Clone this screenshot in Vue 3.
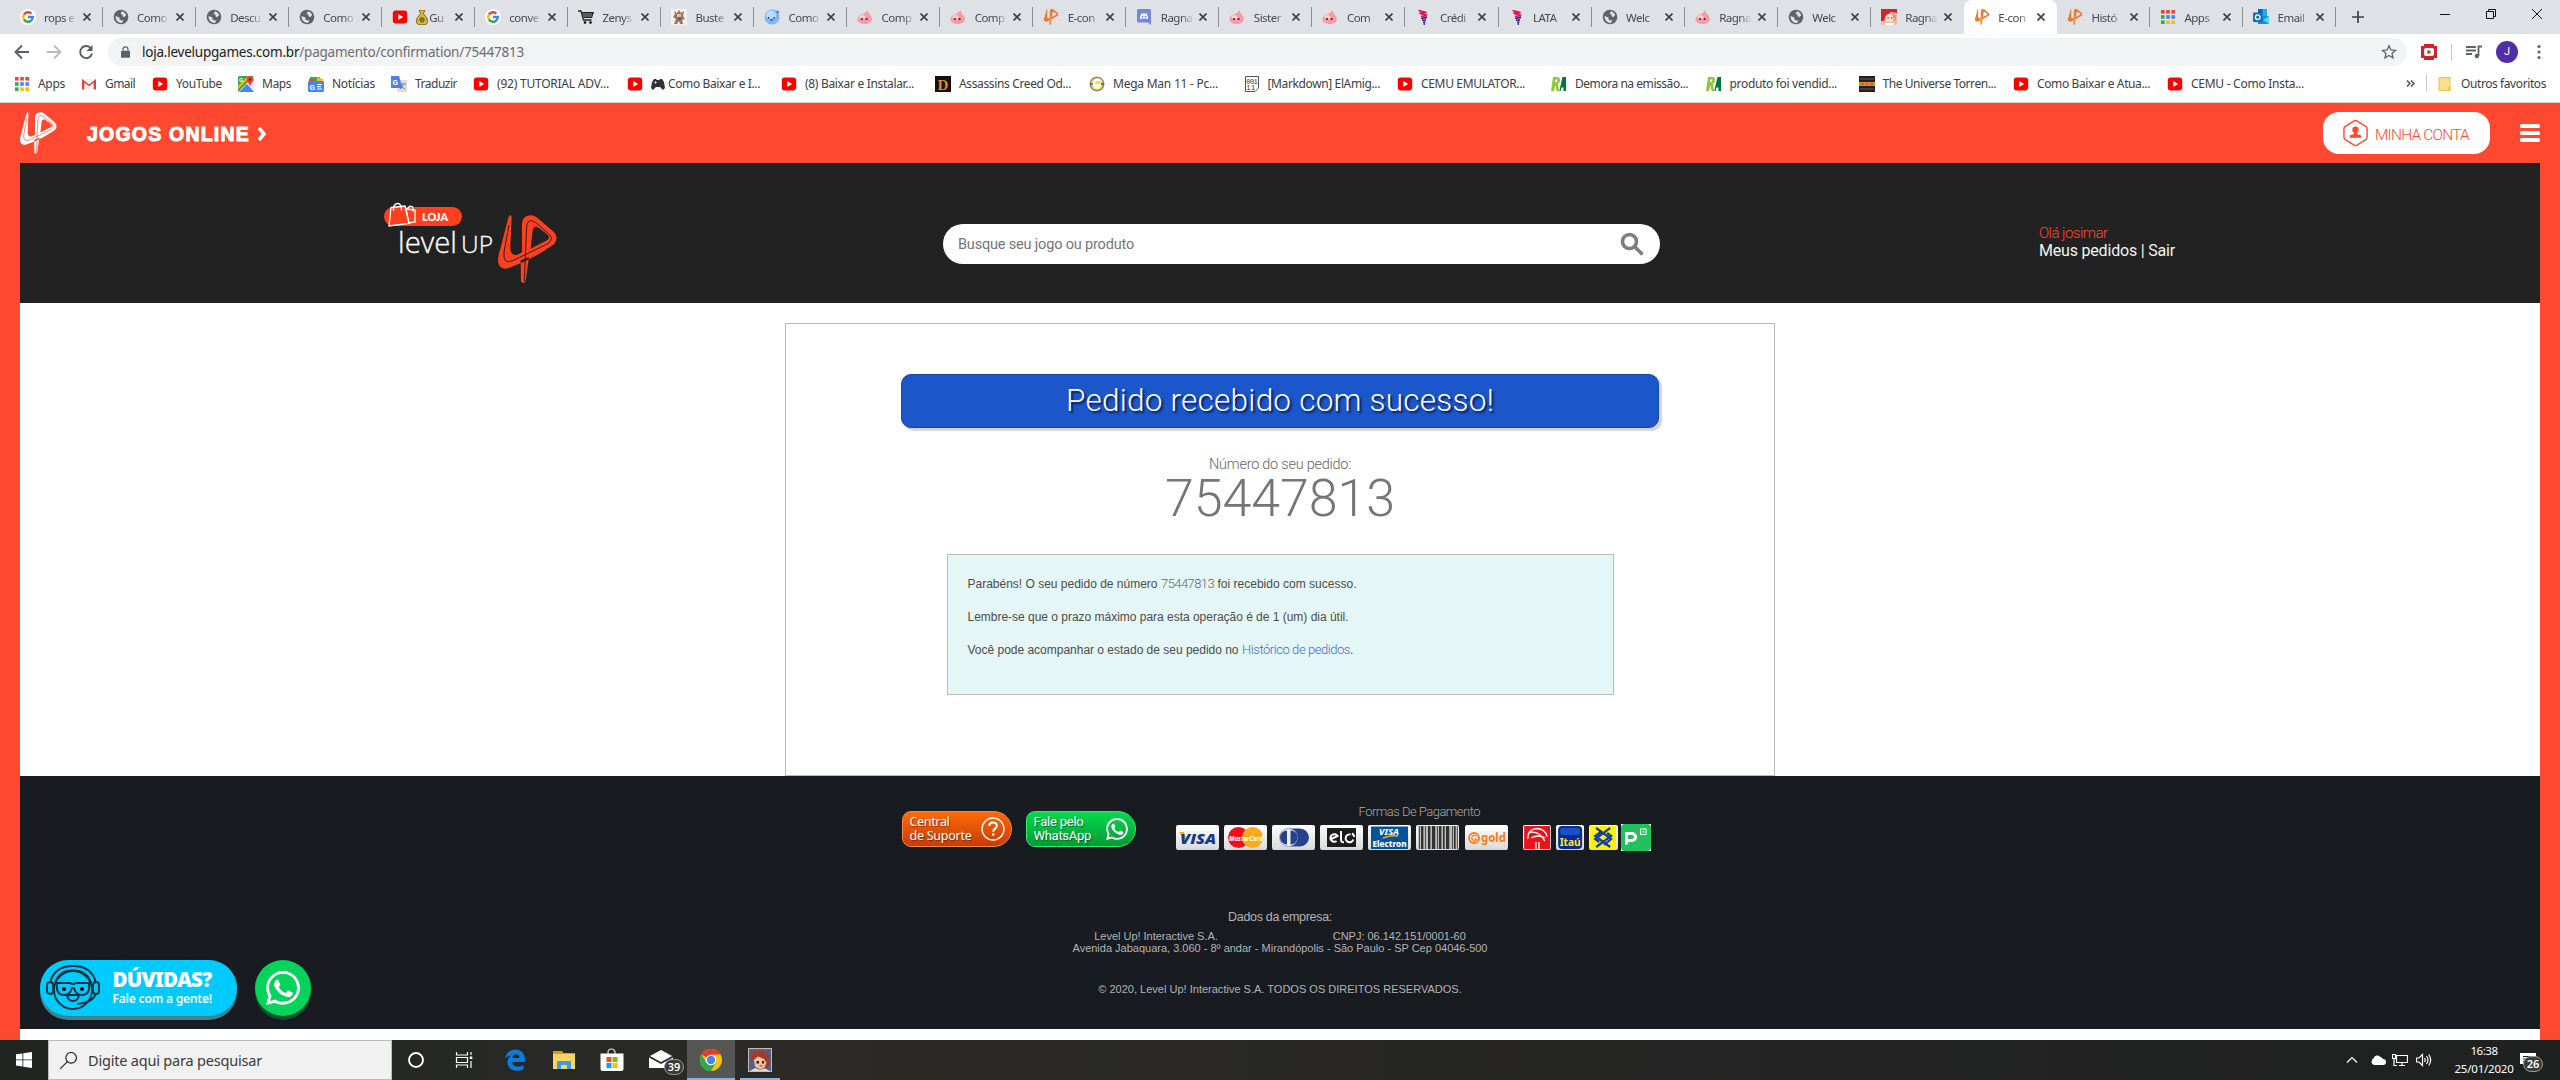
<script setup>
// Tunes letter spacing so a run of text fills the given width in pixels.
const vFit = {
  mounted(el, { value }) {
    const range = document.createRange()
    range.selectNodeContents(el)
    const width = range.getBoundingClientRect().width
    el.style.letterSpacing = `${(value - width) / el.textContent.trim().length}px`
  }
}

const lpShape =
  'M32 5Q38-3 41 5L37 98Q37 124 58 119L72 112V28Q72 2 98 1Q108 1 118 8L168 51Q184 70 168 88Q104 134 30 160Q8 166 1 145Q-2 130 6 105ZM98 101L150 74Q156 67 150 60L122 38Q108 30 104 48Z'
const lpStem = 'M68 136L93 126L83 198Q77 209 69 200Z'
const lpLine = 'M33 30L18 112Q14 150 45 137L150 86Q167 74 156 60L115 24Q90 6 86 34L79 200'
const lp = (fill, line) =>
  `<path d="${lpShape}${lpStem}" fill="${fill}" fill-rule="evenodd"/><path d="${lpLine}" fill="none" stroke="${line}" stroke-width="3"/>`

const apps = [0, 1, 2]
  .flatMap((r) =>
    [0, 1, 2].map((c) => {
      const color = [['#ea4335', '#ea4335', '#ea4335'], ['#34a853', '#4285f4', '#4285f4'], ['#34a853', '#fbbc05', '#fbbc05']][r][c]
      return `<rect x="${1 + c * 5.2}" y="${1 + r * 5.2}" width="3.6" height="3.6" fill="${color}"/>`
    })
  )
  .join('')

const icons = {
  google:
    '<circle cx="8" cy="8" r="8" fill="#fff"/><g fill="none" stroke-width="2.4"><path d="M3.9 5.6A4.8 4.8 0 0 1 11.4 4.6" stroke="#ea4335"/><path d="M3.9 5.6a4.8 4.8 0 0 0 0 4.8" stroke="#fbbc05"/><path d="M3.9 10.4a4.8 4.8 0 0 0 7.4 1.1" stroke="#34a853"/><path d="M8 8h4.8a4.8 4.8 0 0 1-1.5 3.6" stroke="#4285f4"/></g>',
  globe:
    '<circle cx="8" cy="8" r="7.3" fill="#5f6368"/><path d="M9 2.200c2 .5 3.500 2 4.200 4L11 8.300 9.500 7V5.500L7.500 5zM2.500 7l4 1.500v2l2 1 2-.3-1.500 2.800C5 14 2.500 11 2.500 7z" fill="#dee1e6"/>',
  yt: '<rect x=".8" y="1.500" width="14.400" height="13" rx="3" fill="#f00"/><path d="M6.300 5l4.800 3-4.800 3z" fill="#fff"/>',
  cart: '<path d="M0 2h3l2.500 9h8" fill="none" stroke="#222" stroke-width="1.300"/><path d="M4 3h12l-2 6H5.500z" fill="#222"/><circle cx="7" cy="13.500" r="1.300"/><circle cx="12.500" cy="13.500" r="1.300"/><path d="M5 5h9M5 7h9" stroke="#dee1e6" stroke-width=".6"/>',
  fig: '<rect width="16" height="16" fill="#f4f1ee"/><path d="M3 2l3 2 2-3 2 3 3-2-1 5 2 3-3 1 1 4H9l-1-3-2 3H3l2-5-3-2 2-3z" fill="#9a7560"/><path d="M6 5h4v3H6z" fill="#e0c3a0"/><path d="M7 8h3v3H7z" fill="#6c5a85"/>',
  angel: '<circle cx="8" cy="8" r="7.500" fill="#83b5ee"/><circle cx="7" cy="6.500" r="5" fill="#b9d9fa"/><path d="M4.500 8v2M10 8v2M6 10.500q1.500 1 3 0" stroke="#24489a" stroke-width="1.400" fill="none"/><circle cx="13.500" cy="3" r="1.600" fill="#4f8be0"/>',
  poring:
    '<path d="M10.500 1Q11 4 13 6C18 12 12 15 8 15S-2 13 1.500 7.500C3.500 5 8 5.500 10.500 1z" fill="#f99aa5"/><ellipse cx="5.500" cy="8" rx="3" ry="2" fill="#ffd0d4"/><circle cx="5" cy="10" r="1.100" fill="#45242c"/><circle cx="9.600" cy="10" r="1.100" fill="#45242c"/>',
  lp: `<g transform="translate(1 0) scale(.081 .078)">${lp('#ef6c1f', '#fbd3b8')}</g>`,
  discord:
    '<path d="M2.500 0h11Q15 0 15 1.500V16l-3-2.500H2.500Q1 13.500 1 12V1.500Q1 0 2.500 0z" fill="#7289da"/><path d="M4 10.500Q4 6 5.500 4.500h5Q12 6 12 10.500L10.500 9.500h-5z" fill="#fff"/><circle cx="6.500" cy="7.700" r=".9" fill="#7289da"/><circle cx="9.500" cy="7.700" r=".9" fill="#7289da"/>',
  latam: '<path d="M3.500 1.500l8 2.200-7 .5 7.500 2.300-6 .8" fill="none" stroke="#e8114b" stroke-width="1.800"/><path d="M6 9.300l6-.8M7 11.200l4-.2M8 13.200l2.500 0M8.500 15h1.500" fill="none" stroke="#1b0088" stroke-width="1.300"/>',
  ragna:
    '<rect width="16" height="16" rx="2" fill="#f2b8a0"/><path d="M0 0h16v4L10 3 5 7 3 12H0z" fill="#c92a2f"/><circle cx="8.500" cy="9" r="4" fill="#fde0cc"/><path d="M10 2l5 5-1 6-2-5z" fill="#e98a8c"/><circle cx="7" cy="9" r=".8" fill="#933"/><circle cx="10.500" cy="9" r=".8" fill="#933"/><path d="M4 14h9v2H4z" fill="#fff"/>',
  apps,
  outlook:
    '<path d="M5 0h9v7H5z" fill="#28a8ea"/><path d="M5 0h4.500v4H5z" fill="#0364b8"/><path d="M4 7h12v8H5z" fill="#1490df"/><path d="M16 7l-6 4 6 4z" fill="#50d9ff"/><rect y="3.500" width="9.500" height="9.500" rx="1" fill="#0f6cbd"/><circle cx="4.700" cy="8.200" r="2.300" fill="none" stroke="#fff" stroke-width="1.400"/>',
  gmail:
    '<path d="M1 3h14v10.500H1z" fill="#f2f2f2"/><path d="M1 13.500V3l7 5.500L15 3v10.500h-2.300V6.500L8 10.300 3.300 6.500v7z" fill="#db4437"/>',
  maps: '<rect width="16" height="16" rx="1.500" fill="#34a853"/><path d="M0 16L16 0v16z" fill="#e8eaed"/><path d="M1 16L9 8l7 8z" fill="#4285f4"/><path d="M0 10L10 0h3L0 13z" fill="#fbbc05"/><path d="M12 0a3.500 3.500 0 0 1 3.500 3.500C15.500 6 12.500 7 12 11 11.500 7 8.500 6 8.500 3.500A3.500 3.500 0 0 1 12 0z" fill="#ea4335"/><circle cx="12" cy="3.500" r="1.200" fill="#8c1a11"/><text x="1" y="6" font-size="6" font-weight="700" fill="#fff" font-family="Roboto, sans-serif">G</text>',
  news: '<path d="M2 1h10v5H2z" fill="#34a853"/><path d="M9 1l6 2-1 5H9z" fill="#fbbc05"/><path d="M1 3h5v3H1z" fill="#ea4335"/><rect y="5" width="16" height="11" rx="1.200" fill="#4285f4"/><text x="1.500" y="13.500" font-size="8" font-weight="700" fill="#fff" font-family="Roboto, sans-serif">G</text><path d="M9 8.500h5M9 10.700h4M9 13h5" stroke="#fff" stroke-width="1.200"/>',
  translate:
    '<rect x="6" y="4" width="10" height="12" rx="1" fill="#dcdcdc"/><path d="M9 8h6M12 7v1q0 4-3 5M10 9.500q1 2.500 4 3.500" stroke="#7b8fa8" stroke-width="1" fill="none"/><path d="M0 0h8l3.500 12H1q-1 0-1-1z" fill="#4a80e8"/><text x="1.500" y="9" font-size="8" font-weight="700" fill="#fff" font-family="Roboto, sans-serif">G</text>',
  creed: '<rect width="16" height="16" fill="#1a0f08"/><text x="2.500" y="14" font-size="15" font-weight="700" fill="#d98a2c" font-family="Liberation Serif, serif">D</text>',
  mega: '<circle cx="8" cy="8" r="7.500" fill="#8d8d7a"/><circle cx="8" cy="8" r="6" fill="#f4da45"/><path d="M12 5Q8 2 5 6t6 3q0 4-6 2" stroke="#fff" stroke-width="2.200" fill="none"/><path d="M1 8h3M12 8h3" stroke="#555" stroke-width="1.500"/>',
  bin: '<path d="M1.500.5h13V12L11 15.500H1.500z" fill="#fff" stroke="#555"/><text x="2.300" y="7.500" font-size="7" fill="#333" font-family="Liberation Mono, monospace" textLength="11.500">001</text><text x="2.300" y="14" font-size="7" fill="#333" font-family="Liberation Mono, monospace" textLength="9">11</text>',
  ra: '<path d="M2 1h4.500q3 .5 2.500 4-.5 2-2 2.500L8 15H5.500L4.500 9 3 15H0z" fill="#8dc63f"/><path d="M11.500 1H15v14h-2.500v-3.500h-2L9.500 15H8.300z" fill="#00793f"/><path d="M4.500 3.500h2L6 6H4z" fill="#fff"/>',
  torrent: '<rect width="16" height="16" fill="#2b1d16"/><path d="M0 6h16v4H0z" fill="#e28b2d"/><path d="M2 8h3M7 8h2M11 8h3M1 3h14M1 13h14" stroke="#57606c" stroke-width="1.200"/>',
  folder: '<path d="M2 1.500h11v13H2z" fill="#fbe08c" stroke="#e5c25a"/><path d="M11 11h3v3.500h-3z" fill="#f0cb60"/>'
}

const tabs = [
  ['google', 'rops e'], ['globe', 'Como'], ['globe', 'Descu'], ['globe', 'Como'], ['yt', 'Gu', true], ['google', 'conve'],
  ['cart', 'Zenys'], ['fig', 'Buste'], ['angel', 'Como'], ['poring', 'Comp'], ['poring', 'Comp'], ['lp', 'E-con'],
  ['discord', 'Ragna'], ['poring', 'Sister'], ['poring', 'Com'], ['latam', 'Crédi'], ['latam', 'LATA'], ['globe', 'Welc'],
  ['poring', 'Ragna'], ['globe', 'Welc'], ['ragna', 'Ragna'], ['lp', 'E-con'], ['lp', 'Histó'], ['apps', 'Apps'], ['outlook', 'Email']
].map(([icon, label, bag], i) => ({ icon, label, bag, active: i === 21, joined: i === 20 || i === 21 }))

// icon, label, left edge, label width
const marks = [
  ['apps', 'Apps', 14, 27], ['gmail', 'Gmail', 81, 30], ['yt', 'YouTube', 152, 46], ['maps', 'Maps', 238, 29],
  ['news', 'Notícias', 308, 43], ['translate', 'Traduzir', 391, 42], ['yt', '(92) TUTORIAL ADV...', 473, 112],
  ['yt', 'Como Baixar e I...', 627, 92, true], ['yt', '(8) Baixar e Instalar...', 781, 109], ['creed', 'Assassins Creed Od...', 935, 112],
  ['mega', 'Mega Man 11 - Pc...', 1089, 105], ['bin', '[Markdown] ElAmig...', 1243.5, 112.5], ['yt', 'CEMU EMULATOR...', 1397, 104],
  ['ra', 'Demora na emissão...', 1551, 113], ['ra', 'produto foi vendid...', 1705.5, 107.5], ['torrent', 'The Universe Torren...', 1858.5, 113.5],
  ['yt', 'Como Baixar e Atua...', 2013, 113], ['yt', 'CEMU - Como Insta...', 2167, 113]
].map(([icon, label, left, width, pad], i, all) => ({
  icon, label, width, pad, slot: (all[i + 1] ? all[i + 1][2] : 2400) - left
}))

const wa =
  'M12.040 2c-5.460 0-9.910 4.450-9.910 9.910 0 1.750.460 3.450 1.320 4.950L2.050 22l5.250-1.380c1.450.790 3.080 1.210 4.740 1.210 5.460 0 9.910-4.450 9.910-9.910S17.500 2 12.040 2m0 1.670c4.540 0 8.240 3.700 8.240 8.240s-3.700 8.240-8.240 8.240c-1.500 0-2.930-.4-4.190-1.150l-.3-.17-3.120.82.83-3.040-.2-.32a8.190 8.190 0 0 1-1.260-4.380c.01-4.540 3.700-8.240 8.240-8.240M8.500 7.300c-.2 0-.5.1-.7.3C7.500 7.900 6.800 8.500 6.800 9.800s.95 2.600 1.080 2.770c.13.17 1.860 2.980 4.600 4.060 2.270.9 2.740.72 3.230.67s1.600-.65 1.820-1.280c.23-.63.23-1.170.16-1.280s-.25-.18-.52-.31-1.600-.79-1.850-.88c-.25-.09-.43-.13-.61.14s-.7.88-.86 1.060-.32.2-.59.07-1.140-.42-2.170-1.340c-.8-.72-1.350-1.600-1.500-1.870s-.02-.42.12-.55l.4-.47c.14-.16.18-.27.27-.45.09-.18.05-.34-.02-.47s-.6-1.470-.83-2c-.22-.53-.44-.45-.6-.46z'

const bars = [[3, 1], [5, 3], [9, 1], [12, 3], [16, 4], [21, 1], [23, 3], [27, 2], [30, 4], [36, 1], [38, 2], [41, 1]]
</script>

<template>
  <div class="screen">
    <div class="tabstrip">
      <div v-for="(t, i) in tabs" :key="i" class="tab" :class="{ active: t.active, joined: t.joined }">
        <svg class="ico" viewBox="0 0 16 16" v-html="icons[t.icon]"></svg>
        <span class="tab-label"><svg v-if="t.bag" class="bag" viewBox="0 0 12 16"><path d="M3 0h6L7.500 4Q12 8 12 12 12 16 6 16T0 12Q0 8 4.500 4z" fill="#edb52b" stroke="#5b3b00" stroke-width=".8" /><circle cx="6" cy="10.500" r="3" fill="#538a35" /></svg>{{ t.label }}</span>
        <svg class="close" viewBox="0 0 8 8"><path d="M.5.5l7 7M7.500.5l-7 7" /></svg>
      </div>
      <svg class="plus" viewBox="0 0 12 12"><path d="M6 0v12M0 6h12" /></svg>
      <div class="win">
        <svg viewBox="0 0 10 10"><path d="M0 5.500h10" /></svg>
        <svg viewBox="0 0 10 10"><path d="M.5 2.500h7v7h-7zM2.500 2.500v-2h7v7h-2" /></svg>
        <svg viewBox="0 0 10 10"><path d="M0 0l10 10M10 0L0 10" /></svg>
      </div>
    </div>

    <div class="toolbar">
      <svg class="nav" viewBox="0 0 16 16"><path d="M15 8H2M8 1.500L1.500 8 8 14.500" /></svg>
      <svg class="nav off" viewBox="0 0 16 16"><path d="M1 8h13M8 1.500L14.500 8 8 14.500" /></svg>
      <svg class="nav" viewBox="0 0 16 16"><path d="M13 4.500A6 6 0 1 0 14 9.500" /><path class="solid" d="M14.500 1v6h-6z" /></svg>
      <div class="omnibox">
        <svg class="lock" viewBox="0 0 10 13"><rect y="5" width="10" height="8" rx="1" /><path d="M2.300 5V3.500a2.700 2.700 0 0 1 5.400 0V5" /></svg>
        <span v-fit="382" class="url">loja.levelupgames.com.br<i>/pagamento/confirmation/75447813</i></span>
        <svg class="star" viewBox="0 0 16 16"><path d="M8 1.800l1.900 4.200 4.500.4-3.400 3 1 4.500L8 11.500l-4 2.400 1-4.500-3.400-3 4.500-.4z" /></svg>
      </div>
      <svg class="ext" viewBox="0 0 16 16"><path d="M3 0h10v2h3v12h-3v2H3v-2H0V2h3z" fill="#d3222a" /><rect x="3" y="4" width="10" height="8" rx="2" fill="#fff" /><path d="M6.500 5.800l4 2.200-4 2.200z" fill="#d3222a" /></svg>
      <i class="rule"></i>
      <svg class="queue" viewBox="0 0 16 16"><path d="M0 3h10M0 6.500h10M0 10h6M12.500 12V2.500H16" /><circle cx="10.800" cy="12" r="2.200" /></svg>
      <span class="avatar">J</span>
      <svg class="dots" viewBox="0 0 4 16"><circle cx="2" cy="2.500" r="1.600" /><circle cx="2" cy="8" r="1.600" /><circle cx="2" cy="13.500" r="1.600" /></svg>
    </div>

    <div class="bookmarks">
      <div v-for="m in marks" :key="m.label" class="mark" :style="{ width: m.slot + 'px' }">
        <svg class="ico" viewBox="0 0 16 16" v-html="icons[m.icon]"></svg>
        <svg v-if="m.pad" class="pad" viewBox="0 0 14 12"><path d="M3 1h2l1 1h2l1-1h2l2 3 1 6-2 2-3-3H5l-3 3-2-2 1-6z" fill="#333" /><path d="M3 4.500h3M4.500 3v3" stroke="#ccc" stroke-width=".8" /></svg>
        <span v-fit="m.width">{{ m.label }}</span>
      </div>
      <svg class="more" viewBox="0 0 9 7"><path d="M1 .5l3 3-3 3M5 .5l3 3-3 3" /></svg>
      <i class="rule"></i>
      <svg class="ico folder" viewBox="0 0 16 16" v-html="icons.folder"></svg>
      <span v-fit="85">Outros favoritos</span>
    </div>

    <div class="page">
      <header class="topbar">
        <svg class="up" viewBox="0 0 178 206" preserveAspectRatio="none" v-html="lp('#fff', '#ff4830')"></svg>
        <strong v-fit="163">JOGOS ONLINE</strong>
        <svg class="chev" viewBox="0 0 9 14"><path d="M1.500 1L6.500 7l-5 6" /></svg>
        <div class="account">
          <svg viewBox="0 0 26 28"><path d="M11.500 1.400q1.500-.8 3 0L23.500 7q1.500 1 1.500 2.500v9q0 1.500-1.500 2.500l-9 5.600q-1.500.8-3 0L2.500 21Q1 20 1 18.500v-9Q1 8 2.500 7z" fill="none" stroke="#ff4830" stroke-width="1.500" /><circle cx="13" cy="10.500" r="3.300" /><path d="M11.500 12.500h3V15l4.500 1.500V19H7v-2.500l4.500-1.500z" /></svg>
          <span v-fit="94">MINHA CONTA</span>
        </div>
        <div class="burger"><i></i><i></i><i></i></div>
      </header>

      <div class="content">
        <div class="shopbar">
          <svg class="brand" viewBox="380 200 180 90">
            <rect x="384" y="207" width="78" height="19" rx="9.500" fill="#ff401f" />
            <g fill="#ff401f" stroke="#fff" stroke-width="1.300">
              <path d="M406 209l9 1v12l-6 1z" /><path d="M407.500 210q1-5 4.500-3.500 1.500 1 1 5" fill="none" />
              <path d="M391 207.500l14-1.500 4 17.500-20 2.500z" /><path d="M393.500 211q-.5-7 4-7.500 4-.2 4 7" fill="none" />
            </g>
            <text x="422" y="221" class="t-loja" textLength="26" lengthAdjust="spacingAndGlyphs">LOJA</text>
            <text x="398" y="253" class="t-level" textLength="59" lengthAdjust="spacingAndGlyphs">level</text>
            <text x="461" y="253" class="t-up" textLength="32" lengthAdjust="spacingAndGlyphs">UP</text>
            <g transform="translate(498 215) scale(.333)" v-html="lp('#ff401f', '#222')"></g>
          </svg>
          <div class="search">
            <span v-fit="176">Busque seu jogo ou produto</span>
            <svg viewBox="0 0 24 24"><circle cx="9.500" cy="9.500" r="7" /><path d="M14.500 14.500l8 8" /></svg>
          </div>
          <div class="user">
            <span v-fit="68.500" class="hello">Olá josimar</span>
            <span v-fit="136">Meus pedidos | Sair</span>
          </div>
        </div>

        <main>
          <section class="card">
            <h1><span v-fit="428">Pedido recebido com sucesso!</span></h1>
            <p class="cap"><span v-fit="142">Número do seu pedido:</span></p>
            <p class="num"><span v-fit="230">75447813</span></p>
            <div class="info">
              <p><span v-fit="190">Parabéns! O seu pedido de número</span><em v-fit="53">75447813</em><span v-fit="139">foi recebido com sucesso.</span></p>
              <p><span v-fit="381">Lembre-se que o prazo máximo para esta operação é de 1 (um) dia útil.</span></p>
              <p><span v-fit="271">Você pode acompanhar o estado de seu pedido no</span><a v-fit="108">Histórico de pedidos</a><span class="dot">.</span></p>
            </div>
          </section>
        </main>

        <footer>
          <div class="row">
            <div class="help orange">
              <span class="lines"><span v-fit="40">Central</span><span v-fit="62">de Suporte</span></span>
              <svg viewBox="0 0 24 24"><circle cx="12" cy="12" r="11" fill="none" stroke="#fff" stroke-width="1.300" /><path d="M8.300 9q0-3.600 3.700-3.600 3.800 0 3.800 3.300 0 1.800-2 3.100-1.600 1-1.600 3" fill="none" stroke="#fff" stroke-width="2" /><rect x="11" y="16.300" width="2.300" height="2.300" fill="#fff" /></svg>
            </div>
            <div class="help green">
              <span class="lines"><span v-fit="50">Fale pelo</span><span v-fit="57.500">WhatsApp</span></span>
              <svg viewBox="1 1 22 22"><path :d="wa" fill="#fff" /></svg>
            </div>
            <div class="pay">
              <p><span v-fit="121.500">Formas De Pagamento</span></p>
              <div class="cards">
                <svg viewBox="0 0 43 25"><path d="M3 7h5l3 10z" fill="#f7a823" /><text x="4" y="19" class="t-visa" textLength="36" lengthAdjust="spacingAndGlyphs">VISA</text></svg>
                <svg viewBox="0 0 43 25"><circle cx="14.500" cy="12.500" r="10.500" fill="#f20d18" /><circle cx="28.500" cy="12.500" r="10.500" fill="#ffa91f" /><text x="5" y="15.500" class="t-mc" textLength="34" lengthAdjust="spacingAndGlyphs">MasterCard</text></svg>
                <svg viewBox="0 0 43 25"><path d="M18 3.500h10a9 9 0 0 1 0 18H18z" fill="#26428f" /><circle cx="16.500" cy="12.500" r="9" fill="#eef1f6" stroke="#7f92bd" stroke-width=".8" /><path d="M15 5.500v14a7 7 0 0 1 0-14zM18.500 5.500v14a7 7 0 0 0 0-14z" fill="#26428f" /></svg>
                <svg viewBox="0 0 43 25"><rect x="7" y="3" width="29" height="19" fill="#1c1c1c" /><g fill="none" stroke="#fff" stroke-width="2"><path d="M10 14.500l7.500-3.500a3.800 3.800 0 1 0-1 5M21 6v8.500q0 3 3 2.700" /><path d="M30.500 9.500a3.900 3.900 0 1 0 2.800 5M32 8.500q2 1 2.300 3.500" /></g></svg>
                <svg viewBox="0 0 43 25"><rect x="3" y="1.500" width="37" height="22.500" fill="#02549a" /><text x="11" y="9.500" class="t-el" font-style="italic" textLength="20" lengthAdjust="spacingAndGlyphs">VISA</text><path d="M15 13q8-3 15-2" stroke="#f6a31c" stroke-width="1.500" fill="none" /><text x="4.500" y="22" class="t-el" textLength="34" lengthAdjust="spacingAndGlyphs">Electron</text></svg>
                <svg viewBox="0 0 43 25"><rect x="2" y="1" width="39" height="23" fill="#bcbcbc" /><rect v-for="b in bars" :key="b[0]" :x="b[0]" y="1" :width="b[1] * 0.8" height="23" fill="#333" /></svg>
                <svg viewBox="0 0 43 25"><circle cx="9" cy="13" r="5" fill="none" stroke="#ff7a1a" stroke-width="1.800" /><path d="M11.500 11.500a2.600 2.600 0 1 0 .2 2.500H9.500" fill="none" stroke="#ff7a1a" stroke-width="1.200" /><text x="16" y="17" class="t-gold" textLength="25" lengthAdjust="spacingAndGlyphs">gold</text></svg>
                <i class="space"></i>
                <svg class="bank" viewBox="0 0 28 25"><rect x="1" y="1" width="26" height="23" fill="#ec1218" /><path d="M4.500 14q0-10 9.500-10.500 8 .5 10 8M6 7.500q10-2 15.500 8.500M12.800 24v-7M15.800 24v-7M8 13q7-4 14 0" fill="none" stroke="#fff" stroke-width="1.300" /></svg>
                <svg class="bank" viewBox="0 0 28 25"><rect x="2" y="1" width="24" height="23" rx="4" fill="#062a9a" /><rect x="4" y="3" width="20" height="7" rx="3" fill="#1a51c4" /><text x="3.500" y="20.500" class="t-itau" textLength="21" lengthAdjust="spacingAndGlyphs">Itaú</text></svg>
                <svg class="bank" viewBox="0 0 28 25"><rect x="1" y="1" width="26" height="23" fill="#fff200" /><path d="M7 3l15 11-7 6M21 3L6 14l4 3M7 22l15-11-4-3M21 22L6 11l7-5" fill="none" stroke="#153f97" stroke-width="2.200" /></svg>
                <svg class="pic" viewBox="0 0 30 27"><rect width="30" height="27" fill="#fff" /><rect width="30" height="27" rx="4" fill="#21c25e" /><path d="M5.500 20.500V9.500h5.500a3.500 3.500 0 0 1 0 7H7" fill="none" stroke="#fff" stroke-width="3" /><rect x="19.500" y="5" width="5.500" height="5.500" fill="none" stroke="#fff" /><rect x="21.500" y="7" width="1.600" height="1.600" fill="#fff" /></svg>
              </div>
            </div>
          </div>
          <div class="legal">
            <p class="title"><span v-fit="104">Dados da empresa:</span></p>
            <p class="pair"><span v-fit="123.500">Level Up! Interactive S.A.</span><span v-fit="133">CNPJ: 06.142.151/0001-60</span></p>
            <p><span v-fit="415">Avenida Jabaquara, 3.060 - 8º andar - Mirandópolis - São Paulo - SP Cep 04046-500</span></p>
            <p class="copy"><span v-fit="363.500">© 2020, Level Up! Interactive S.A. TODOS OS DIREITOS RESERVADOS.</span></p>
          </div>
        </footer>
      </div>

      <div class="float">
        <div class="doubts">
          <svg viewBox="0 0 54 46"><g fill="none" stroke="#06333f" stroke-width="1.900"><circle cx="27" cy="25" r="19" /><path d="M4 18Q8 1 27 1t23 17M9 18Q13 5.500 27 5.500T45 18" /><rect x="1" y="17" width="6" height="12" rx="3" /><rect x="47" y="17" width="6" height="12" rx="3" /><path d="M11 18h13q3 2 6 0h13v6q-1 6-7 6t-8-7h-2q-2 7-8 7t-7-6z" /><path d="M21 30h12q-1 6-6 6t-6-6zM50 29q-4 9-19 10" /></g><circle cx="18" cy="24" r="2" /><circle cx="36" cy="24" r="2" /></svg>
          <span class="dtext"><b v-fit="99">DÚVIDAS?</b><span v-fit="99.500">Fale com a gente!</span></span>
        </div>
        <div class="wa"><svg viewBox="2 2 20 20"><path :d="wa" fill="#fff" /></svg></div>
      </div>
    </div>

    <div class="taskbar">
      <div class="start"><svg viewBox="0 0 16 16"><path d="M0 2.300l6.500-.9v6.100H0zM7.300 1.300L16 0v7.500H7.300zM0 8.300h6.500v6.200L0 13.600zM7.300 8.300H16V16l-8.700-1.300z" fill="#fff" /></svg></div>
      <div class="find">
        <svg viewBox="0 0 16 16"><circle cx="10.500" cy="5.500" r="5" /><path d="M7 9L0 16" /></svg>
        <span v-fit="174">Digite aqui para pesquisar</span>
      </div>
      <div class="app"><svg viewBox="0 0 24 24"><circle cx="12" cy="12" r="7" fill="none" stroke="#fff" stroke-width="1.900" /></svg></div>
      <div class="app"><svg viewBox="0 0 24 24"><path d="M4.500 4v3h11V4M4.500 20v-3h11v3M4.500 9.500h11v5h-11zM19 4v3M19 13v7" fill="none" stroke="#fff" stroke-width="1.200" /><rect x="17.800" y="8.500" width="2.500" height="2.500" fill="#fff" /></svg></div>
      <div class="app wide"><svg viewBox="0 0 24 24"><path d="M2 11C3 4.500 7.500 1.500 12.500 1.500 18.500 1.500 22 6 22 11v3H9c.3 3 3 4.500 6 4.500 2 0 4-.5 5.500-1.500v4.300c-2 1-4 1.500-6.500 1.500-6 0-9.500-3.700-9.500-8.500 0-3.200 1.700-5.700 4.500-7C5 8 3 9 2 11zm7.200-1h7.300c0-2.300-1.200-3.800-3.500-3.800S9.500 7.700 9.200 10z" fill="#0a7bd9" /></svg></div>
      <div class="app"><svg viewBox="0 0 24 24"><path d="M1 3h9l1.500 2H23v16H1z" fill="#d99a1c" /><path d="M1 6h22v15H1z" fill="#fcd462" /><path d="M5 21v-7q0-1 1-1h12q1 0 1 1v7h-4v-4H9v4z" fill="#3f9be0" /></svg></div>
      <div class="app"><svg viewBox="0 0 24 24"><path d="M8 6V4.500a3.500 3.500 0 0 1 7 0V6" fill="none" stroke="#ddd" stroke-width="1.200" /><path d="M.5 5.500h23V21q0 2-2 2h-19q-2 0-2-2z" fill="#fff" /><path d="M6.500 9h5v5h-5z" fill="#f25022" /><path d="M12.500 9h5v5h-5z" fill="#7fba00" /><path d="M6.500 15h5v5h-5z" fill="#00a4ef" /><path d="M12.500 15h5v5h-5z" fill="#ffb900" /></svg></div>
      <div class="app mail"><svg viewBox="0 0 24 24"><path d="M0 8.500l12-6.500 12 6.500V20H0z" fill="#fff" /><path d="M0 8.500l12 6.500 12-6.500" fill="none" stroke="#2a2a27" stroke-width="1.800" /></svg><span class="badge">39</span></div>
      <div class="app chrome"><svg viewBox="0 0 24 24"><circle cx="12" cy="12" r="11" fill="#fbc116" /><path d="M12 12L2.470 6.500A11 11 0 0 1 21.530 6.500H12z" fill="#e33b2e" /><path d="M2.470 6.500A11 11 0 0 0 12 23l4.800-8.300L7.300 14.700z" fill="#2da94f" /><circle cx="12" cy="12" r="5.300" fill="#fff" /><circle cx="12" cy="12" r="4.200" fill="#4285f4" /></svg></div>
      <div class="app game"><svg viewBox="0 0 24 24"><rect width="24" height="24" fill="#c9bcae" /><rect x="1" y="1" width="22" height="22" fill="#56608f" /><path d="M2 11L4 8 1.500 4l4 1.500L6 1.500l3 3 2-3.500 2 3.500 3-3.500.5 4L21 2l-2 5 4 0-3 4 2 4-2.500 6-3-5-2-6-6-1-5 4z" fill="#a03d24" /><path d="M6 12l4-3.500 6 2.500 2.500 4-2.500 5-4 1.500-5-3z" fill="#f3c19b" /><path d="M8.500 13h2.500v2.500H8.500zM14 13h2v2.500h-2z" fill="#3a1512" /><path d="M11.500 18h3" stroke="#a33" /><path d="M2 23l5-3 5 2 5-1.500 5 2.500z" fill="#e6dcd6" /></svg></div>
      <div class="tray">
        <svg class="t1" viewBox="0 0 16 16"><path d="M3 10.500l5-5 5 5" /></svg>
        <svg class="t2" viewBox="0 0 16 16"><path class="fill" d="M4 13a3.500 3.500 0 0 1-.5-6.500A4 4 0 0 1 10.500 5 3.500 3.500 0 0 1 13 7a3 3 0 0 1 0 6z" /></svg>
        <svg class="t3" viewBox="0 0 16 16"><path d="M4.500 3.500h11v7h-11zM10 10.500v3M7 13.500h6M.5 2.500h3v4h-3zM2 6.500v7h3" /></svg>
        <svg class="t4" viewBox="0 0 16 16"><path d="M.5 6h2.500l3.500-3.500v11L3 10H.5zM8.500 6q1.500 2 0 4M10.500 4q3 4 0 8M12.700 2.500q4 5.500 0 11" /></svg>
        <div class="clock"><span v-fit="27">16:38</span><span v-fit="59">25/01/2020</span></div>
        <div class="note"><svg viewBox="0 0 16 16"><path class="fill" d="M0 1h16v11H9l-4 4v-4H0z" /><path d="M3 4.500h10M3 7h10M3 9.500h6" stroke="#222" /></svg><span class="badge">26</span></div>
      </div>
    </div>
  </div>
</template>

<style>
body { margin: 0; overflow: hidden; }
</style>

<style scoped>
.screen { width: 2560px; height: 1080px; display: flex; flex-direction: column; overflow: hidden; background: #fff; font-family: "Noto Sans", "Open Sans", sans-serif; }
.screen * { box-sizing: border-box; }
svg { display: block; flex: none; }
p, h1 { margin: 0; font-weight: normal; }
span, em, a, strong, b { white-space: nowrap; }
i, em { font-style: normal; }
.ico { width: 16px; height: 16px; }

.tabstrip { height: 34px; flex: none; display: flex; background: #dee1e6; padding-left: 9.500px; }
.tab { width: 93.070px; flex: none; display: flex; align-items: center; padding: 0 0 0 10px; background: linear-gradient(#8b8e92, #8b8e92) right 7px / 1px 20px no-repeat; }
.tab.joined { background: none; }
.tab.active { background: #fff; border-radius: 8px 8px 0 0; }
.tab-label { display: flex; align-items: center; flex: none; width: 34px; margin-left: 8.500px; overflow: hidden; font-size: 11.500px; letter-spacing: -.5px; color: #45484c; mask-image: linear-gradient(90deg, #000 60%, transparent 96%); }
.bag { width: 12px; height: 15px; margin-right: 1px; }
.close { width: 8px; height: 8px; margin-left: 4.500px; fill: none; stroke: #3c4043; stroke-width: 1.600; }
.plus { width: 12px; height: 12px; margin: 11px 0 0 16px; stroke: #3c4043; stroke-width: 1.700; }
.win { display: flex; gap: 36px; margin: 9px 0 0 76px; }
.win svg { width: 10px; height: 10px; fill: none; stroke: #111; stroke-width: 1; }

.toolbar { height: 36px; flex: none; display: flex; align-items: center; padding-left: 14px; }
.nav { width: 16px; height: 16px; margin-right: 16px; fill: none; stroke: #5a5d61; stroke-width: 1.900; }
.nav.off { stroke: #b9bbbd; }
.solid { fill: #5a5d61; stroke: none; }
.omnibox { width: 2299px; height: 28px; margin-left: -2px; border-radius: 14px; background: #f1f3f4; display: flex; align-items: center; padding: 0 10px 0 13px; }
.lock { width: 9px; height: 12px; fill: #5f6368; }
.lock path { fill: none; stroke: #5f6368; stroke-width: 1.400; }
.url { margin-left: 12px; font-size: 13.500px; color: #202124; }
.url i { color: #6a6d71; }
.star { width: 16px; height: 16px; margin-left: auto; fill: none; stroke: #5f6368; stroke-width: 1.300; }
.ext { width: 16px; height: 16px; margin-left: 14px; }
.rule { width: 1px; height: 17px; background: #c4c7cb; }
.toolbar .rule { margin: 0 14px; }
.queue { width: 16px; height: 16px; stroke: #5f6368; stroke-width: 1.800; fill: none; }
.queue circle { fill: #5f6368; stroke: none; }
.avatar { width: 22px; height: 22px; margin-left: 14px; border-radius: 50%; background: #512da8; color: #fff; font: 11px/22px Roboto, sans-serif; text-align: center; }
.dots { width: 4px; height: 16px; margin-left: 19px; fill: #5f6368; }

.bookmarks { height: 33px; flex: none; display: flex; align-items: center; padding: 0 0 5px 14px; border-bottom: 1px solid #d5d7da; font-size: 12px; color: #3c4043; }
.mark { display: flex; align-items: center; flex: none; }
.mark .ico { margin-right: 8px; }
.pad { width: 14px; height: 12px; margin-right: 3px; }
.more { margin: 0 3px 0 6px; width: 9px; height: 7px; fill: none; stroke: #4c5054; stroke-width: 1.500; }
.bookmarks .rule { margin: 0 10px 0 8px; }
.folder { margin-right: 8px; }

.page { position: relative; height: 937px; flex: none; background: #ff4830; }
.topbar { height: 60px; display: flex; align-items: center; padding: 0 20px; }
.up { width: 37px; height: 42px; }
.topbar strong { margin: 2px 0 0 30px; color: #fff; font: 900 19.500px/22px "Liberation Sans", sans-serif; -webkit-text-stroke: 1px #fff; }
.chev { width: 10px; height: 14px; margin: 2px 0 0 7px; fill: none; stroke: #fff; stroke-width: 3.600; }
.account { width: 167px; height: 42px; margin-left: auto; background: #fff; border-radius: 16px; display: flex; align-items: center; padding-left: 20px; color: #ff4830; font: 300 15.500px/20px Roboto, sans-serif; }
.account span { margin-top: 3px; }
.account svg { width: 25px; height: 28px; margin-right: 7px; fill: #ff4830; }
.burger { width: 20px; margin-left: 30px; display: grid; gap: 3px; }
.burger i { height: 4px; border-radius: 1.500px; background: #fff; }

.content { margin: 0 20px; height: 877px; background: #fff; }
.shopbar { height: 140px; background: #222; display: flex; align-items: flex-start; padding-left: 360px; }
.brand { width: 180px; height: 90px; margin-top: 37px; }
.t-loja { font: 900 11px Lato, sans-serif; fill: #fff; }
.t-level, .t-up { font: 300 29px "Open Sans", sans-serif; fill: #fff; stroke: #fff; stroke-width: .3; }
.t-up { font-size: 24px; }
.search { width: 717px; height: 40px; margin: 61px 0 0 383px; border-radius: 20px; background: #fff; display: flex; align-items: center; justify-content: space-between; padding: 0 16px 0 15px; font: 14.500px Roboto, sans-serif; color: #757575; }
.search svg { width: 24px; height: 24px; fill: none; stroke: #7d7d7d; stroke-width: 3.600; }
.user { margin: 61px 0 0 379px; display: flex; flex-direction: column; align-items: flex-start; font: 16px/18px Roboto, sans-serif; color: #f4f4f4; }
.hello { font-size: 15px; font-weight: 300; color: #ff4830; }

main { height: 473px; padding-top: 20px; display: flex; justify-content: center; }
.card { width: 990px; height: 453px; border: 1px solid #bbb; padding-top: 50px; }
h1 { width: 758px; height: 54px; margin: 0 auto; border-radius: 10px; border: 1px solid #1747a0; background: #1b56cb; box-shadow: 3px 3px 1px #d4d4d6; text-align: center; font: 300 31.500px/51px Roboto, sans-serif; color: #fff; text-shadow: 2px 2px 2px #0b1c50; }
.cap { margin-top: 28px; text-align: center; font: 300 14.500px/17px Roboto, sans-serif; color: #666; }
.num { text-align: center; font: 300 52px/51px Roboto, sans-serif; color: #757575; }
.info { width: 667px; height: 141px; margin: 30px auto 0; padding: 13px 20px 0; border: 1px solid #bbb; background: #e5f6f6; font: 12px/33px "Liberation Sans", sans-serif; color: #4c4c4c; }
.info p { display: flex; height: 33px; }
.info em, .info a { font: 300 13px/32px Roboto, sans-serif; margin-left: 3.500px; color: #666; }
.info em { margin-right: 3.500px; }
.info a { color: #4769cc; }

footer { height: 253px; background: #181b20; padding-top: 25px; }
.row { display: flex; padding-left: 881.500px; align-items: flex-start; }
.help { width: 110px; height: 36px; margin: 10px 14px 0 0; border-radius: 9px 18px 18px 9px; border: 1px solid; display: flex; align-items: center; justify-content: space-between; padding: 0 6px 0 7px; color: #fff; font: 400 12.500px/14px "Noto Sans", sans-serif; text-shadow: 1px 1px 1px rgba(0, 0, 0, .4); }
.help svg { width: 24px; height: 24px; }
.lines { display: flex; flex-direction: column; align-items: flex-start; margin-top: -1px; }
.orange { background: linear-gradient(#ff6a08, #c73c07); border-color: #f98548; }
.green { background: linear-gradient(#05d94b, #049a36); border-color: #2df069; font: 400 13px/14px Roboto, sans-serif; }
.pay { margin-left: 26px; width: 476px; }
.pay p { height: 23px; padding: 3px 0 0 183px; font: 300 13px/15px Roboto, sans-serif; color: #aaa; }
.cards { display: flex; align-items: center; gap: 5.200px; height: 27px; }
.cards svg { width: 43px; height: 25px; border-radius: 2px; background: linear-gradient(#fff, #d9d9d9); }
.cards .bank { width: 28.300px; }
.cards .pic { width: 30px; height: 27px; border-radius: 0; margin-left: -2px; }
.space { width: 4.500px; }
.t-visa { font: italic 800 14px "Open Sans", sans-serif; fill: #15368c; }
.t-mc { font: italic 700 7px "Open Sans", sans-serif; fill: #fff; }
.t-el { font-family: "Noto Sans", sans-serif; font-size: 9px; font-weight: 800; fill: #fff; }
.t-gold { font: 700 12px "Noto Sans", sans-serif; fill: #ff7a1a; }
.t-itau { font: 700 11px "Noto Sans", sans-serif; fill: #ffe81a; }
.legal { margin-top: 59px; text-align: center; font: 11px/12px "Liberation Sans", sans-serif; color: #b4b5b7; }
.title { font-size: 12.500px; line-height: 15px; margin-bottom: 5px; }
.pair { display: flex; justify-content: center; gap: 115px; }
.copy { margin-top: 29px; }

.float { position: absolute; left: 40px; top: 857px; display: flex; gap: 18px; }
.doubts { width: 197px; height: 56px; border-radius: 28px; background: #00caff; box-shadow: 0 4px #3a8494; display: flex; align-items: center; padding-left: 6px; }
.doubts svg { width: 54px; height: 46px; margin-right: 12.500px; }
.dtext { display: flex; flex-direction: column; align-items: flex-start; color: #fff; font: 600 12px/17px "Noto Sans", sans-serif; }
.dtext b { font: 900 20.500px/21px "Noto Sans", sans-serif; }
.wa { width: 56px; height: 56px; border-radius: 50%; background: #06d35c; box-shadow: 0 4px #0d552d; display: flex; align-items: center; justify-content: center; }
.wa svg { width: 34px; height: 34px; }

.taskbar { height: 40px; flex: none; display: flex; background: linear-gradient(90deg, #202522, #2b2a27 30%, #242424 70%, #1f2020); }
.start { width: 48px; display: flex; align-items: center; justify-content: center; }
.start svg { width: 16px; height: 16px; }
.find { width: 344px; background: #f1f1f1; border: 1px solid #bdbdbd; display: flex; align-items: center; padding-left: 11px; font: 14.500px "Noto Sans", sans-serif; color: #3a3a3a; }
.find svg { width: 17px; height: 17px; margin-right: 11px; fill: none; stroke: #222; stroke-width: 1.100; }
.app { position: relative; width: 48px; display: flex; align-items: center; justify-content: center; }
.app svg { width: 24px; height: 24px; }
.app.wide { margin-left: 3px; }
.app.wide + .app { margin-left: 1px; }
.chrome { background: #565654; border-bottom: 2px solid #76b9ed; width: 48px; }
.chrome svg { margin-top: 2px; }
.mail { width: 51px; }
.mail svg { margin-right: 1px; }
.game { width: 40px; margin-left: 5px; border-bottom: 2px solid #76b9ed; }
.game svg { margin-top: 2px; }
.badge { position: absolute; left: 28px; top: 19px; width: 20px; height: 16px; border-radius: 8px; border: 1px solid #999; background: #3b3b39; color: #fff; font: 600 11px/14px "Noto Sans", sans-serif; text-align: center; }
.tray { margin-left: auto; display: flex; align-items: center; }
.tray svg { width: 16px; height: 16px; fill: none; stroke: #fff; stroke-width: 1.200; }
.tray .fill { fill: #fff; stroke: none; }
.t1 { margin-right: 10px; }
.t2 { margin-right: 6px; }
.t3 { margin-right: 8px; }
.clock { width: 60px; margin: 0 6px 0 22px; display: flex; flex-direction: column; align-items: center; font: 11.500px/18px "Noto Sans", sans-serif; color: #fff; }
.note { position: relative; width: 40px; }
.note .badge { left: 3px; top: 4px; }
</style>
